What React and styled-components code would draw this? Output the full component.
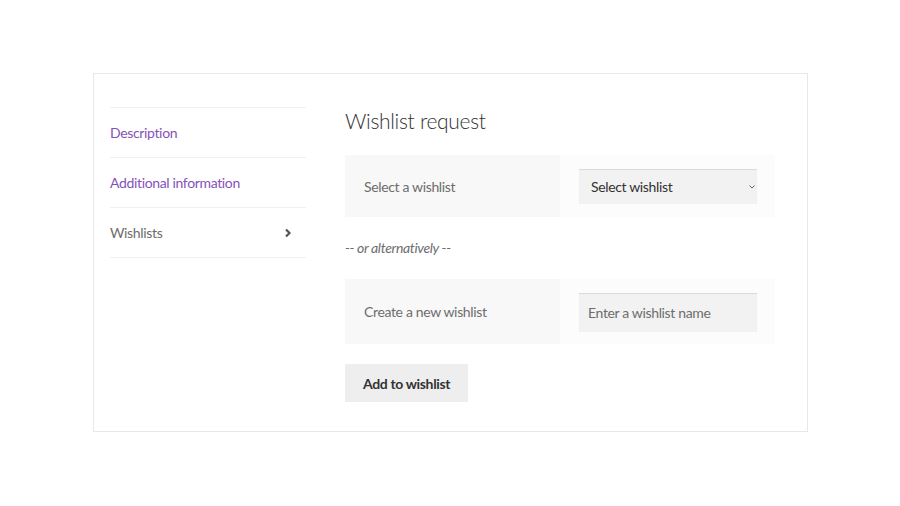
import React from 'react'
import styled, { createGlobalStyle } from 'styled-components'

const GlobalStyle = createGlobalStyle`
  html, body {
    margin: 0;
    padding: 0;
    background: #ffffff;
  }
  body {
    font-family: Lato, "Open Sans", "Liberation Sans", sans-serif;
    color: #6d6d6d;
    letter-spacing: -0.35px;
    -webkit-font-smoothing: antialiased;
  }
`

const Page = styled.div`
  padding-top: 73px;
  display: flex;
  justify-content: center;
`

const Card = styled.div`
  box-sizing: border-box;
  width: 715px;
  margin-left: 1px;
  border: 1px solid #e8e8e8;
  padding: 33px 16px 29px 16px;
  display: flex;
  gap: 39px;
`

const TabList = styled.ul`
  list-style: none;
  margin: 0;
  padding: 0;
  width: 196px;
  flex-shrink: 0;
  border-top: 1px solid #f0f0f0;
  align-self: flex-start;
`

const Tab = styled.li`
  box-sizing: border-box;
  height: 50px;
  border-bottom: 1px solid #f0f0f0;
  display: flex;
  align-items: center;
  justify-content: space-between;
  padding-right: 14px;
  font-size: 14px;
  color: ${p => (p.$active ? '#6d6d6d' : '#8453b8')};
`

const Content = styled.div`
  width: 430px;
  display: flex;
  flex-direction: column;
  align-items: flex-start;
`

const Title = styled.h2`
  margin: 0 0 21px;
  font-size: 21px;
  line-height: 27px;
  font-weight: 300;
  letter-spacing: -0.3px;
  color: #333333;
`

const FormRow = styled.div`
  width: 100%;
  display: grid;
  grid-template-columns: 215px 215px;
  height: ${p => p.$h}px;
`

const Label = styled.div`
  background: #f8f8f8;
  display: flex;
  align-items: center;
  padding-left: 19px;
  font-size: 14px;
  color: #6d6d6d;
`

const Field = styled.div`
  background: #fcfcfc;
  display: flex;
  align-items: center;
  padding-left: 19px;
`

const SelectWrap = styled.div`
  position: relative;
  width: 178px;
  height: 35px;
  margin-top: 1px;
`

const Select = styled.select`
  appearance: none;
  -webkit-appearance: none;
  box-sizing: border-box;
  width: 100%;
  height: 100%;
  border: 0;
  outline: none;
  background: #f2f2f2;
  box-shadow: inset 0 1px 1px rgba(0, 0, 0, 0.1);
  padding: 0 0 0 12px;
  font-family: inherit;
  font-size: 14px;
  letter-spacing: inherit;
  color: #333333;
`

const Caret = styled.svg`
  position: absolute;
  right: 2px;
  top: 16px;
  pointer-events: none;
`

const Input = styled.input`
  box-sizing: border-box;
  width: 178px;
  height: 39px;
  margin-top: 1px;
  border: 0;
  outline: none;
  background: #f2f2f2;
  box-shadow: inset 0 1px 1px rgba(0, 0, 0, 0.1);
  padding: 0 9px;
  font-family: inherit;
  font-size: 14px;
  letter-spacing: inherit;
  color: #333333;

  &::placeholder {
    color: #6d6d6d;
  }
`

const Alt = styled.p`
  margin: 21px 0;
  line-height: 20px;
  font-size: 14px;
  font-style: italic;
  color: #6d6d6d;
`

const Button = styled.button`
  margin-top: 20px;
  height: 38px;
  padding: 0 18px;
  border: 0;
  background: #eeeeee;
  font-family: inherit;
  font-size: 14px;
  font-weight: 700;
  letter-spacing: inherit;
  color: #333333;
  cursor: pointer;
`

const Chevron = () => (
  <svg width="8" height="10" viewBox="0 0 8 10">
    <path d="M2 1.5 L5.5 5 L2 8.5" fill="none" stroke="#555" strokeWidth="2.2" />
  </svg>
)

export default function App() {
  return (
    <>
      <GlobalStyle />
      <Page>
        <Card>
          <TabList>
            <Tab>Description</Tab>
            <Tab>Additional information</Tab>
            <Tab $active>
              Wishlists
              <Chevron />
            </Tab>
          </TabList>

          <Content>
            <Title>Wishlist request</Title>

            <FormRow $h={62}>
              <Label>Select a wishlist</Label>
              <Field>
                <SelectWrap>
                  <Select defaultValue="">
                    <option value="">Select wishlist</option>
                  </Select>
                  <Caret width="6" height="4" viewBox="0 0 6 4">
                    <path d="M0.5 0.5 L3 3 L5.5 0.5" fill="none" stroke="#666" strokeWidth="1" />
                  </Caret>
                </SelectWrap>
              </Field>
            </FormRow>

            <Alt>-- or alternatively --</Alt>

            <FormRow $h={65}>
              <Label>Create a new wishlist</Label>
              <Field>
                <Input placeholder="Enter a wishlist name" />
              </Field>
            </FormRow>

            <Button>Add to wishlist</Button>
          </Content>
        </Card>
      </Page>
    </>
  )
}
